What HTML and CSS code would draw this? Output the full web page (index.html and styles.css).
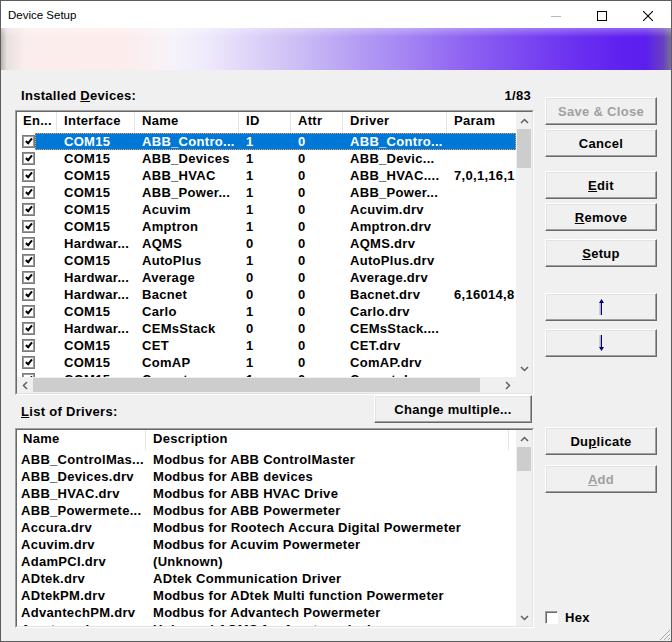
FILE: index.html
```html
<!DOCTYPE html>
<html lang="en">

<head>
    <meta charset="UTF-8">
    <title>Device Setup</title>
    <link rel="stylesheet" href="styles.css">
</head>

<body>
    <div class="window">
        <div class="titlebar">
            <span class="title">Device Setup</span>
            <div class="caption">
                <span class="cap"><svg width="10" height="10" viewBox="0 0 10 10"><path d="M0 5.5h10" stroke="#b8b8b8"/></svg></span>
                <span class="cap"><svg width="10" height="10" viewBox="0 0 10 10"><rect x=".5" y=".5" width="9" height="9" fill="none" stroke="#000"/></svg></span>
                <span class="cap"><svg width="10" height="10" viewBox="0 0 10 10"><path d="M0 0l10 10M10 0L0 10" stroke="#000" stroke-width="1.1"/></svg></span>
            </div>
        </div>

        <div class="banner"></div>

        <div class="client">
            <div class="left">
                <div class="label-row">
                    <span>Installed <u>D</u>evices:</span>
                    <span>1/83</span>
                </div>

                <div class="lv lv-devices">
                    <div class="lv-in">
                        <div class="lv-body">
                            <div class="lv-head dev-head">
                                <span>En...</span>
                                <span>Interface</span>
                                <span>Name</span>
                                <span>ID</span>
                                <span>Attr</span>
                                <span>Driver</span>
                                <span>Param</span>
                            </div>
                            <div class="rows">
                                <div class="row sel"><span class="ck-cell"><span class="chk"></span></span><div class="cells"><span></span><span>COM15</span><span>ABB_Contro...</span><span>1</span><span>0</span><span>ABB_Contro...</span><span></span></div></div>
                                <div class="row"><span class="ck-cell"><span class="chk"></span></span><div class="cells"><span></span><span>COM15</span><span>ABB_Devices</span><span>1</span><span>0</span><span>ABB_Devic...</span><span></span></div></div>
                                <div class="row"><span class="ck-cell"><span class="chk"></span></span><div class="cells"><span></span><span>COM15</span><span>ABB_HVAC</span><span>1</span><span>0</span><span>ABB_HVAC....</span><span>7,0,1,16,1</span></div></div>
                                <div class="row"><span class="ck-cell"><span class="chk"></span></span><div class="cells"><span></span><span>COM15</span><span>ABB_Power...</span><span>1</span><span>0</span><span>ABB_Power...</span><span></span></div></div>
                                <div class="row"><span class="ck-cell"><span class="chk"></span></span><div class="cells"><span></span><span>COM15</span><span>Acuvim</span><span>1</span><span>0</span><span>Acuvim.drv</span><span></span></div></div>
                                <div class="row"><span class="ck-cell"><span class="chk"></span></span><div class="cells"><span></span><span>COM15</span><span>Amptron</span><span>1</span><span>0</span><span>Amptron.drv</span><span></span></div></div>
                                <div class="row"><span class="ck-cell"><span class="chk"></span></span><div class="cells"><span></span><span>Hardwar...</span><span>AQMS</span><span>0</span><span>0</span><span>AQMS.drv</span><span></span></div></div>
                                <div class="row"><span class="ck-cell"><span class="chk"></span></span><div class="cells"><span></span><span>COM15</span><span>AutoPlus</span><span>1</span><span>0</span><span>AutoPlus.drv</span><span></span></div></div>
                                <div class="row"><span class="ck-cell"><span class="chk"></span></span><div class="cells"><span></span><span>Hardwar...</span><span>Average</span><span>0</span><span>0</span><span>Average.drv</span><span></span></div></div>
                                <div class="row"><span class="ck-cell"><span class="chk"></span></span><div class="cells"><span></span><span>Hardwar...</span><span>Bacnet</span><span>0</span><span>0</span><span>Bacnet.drv</span><span>6,16014,8</span></div></div>
                                <div class="row"><span class="ck-cell"><span class="chk"></span></span><div class="cells"><span></span><span>COM15</span><span>Carlo</span><span>1</span><span>0</span><span>Carlo.drv</span><span></span></div></div>
                                <div class="row"><span class="ck-cell"><span class="chk"></span></span><div class="cells"><span></span><span>Hardwar...</span><span>CEMsStack</span><span>0</span><span>0</span><span>CEMsStack....</span><span></span></div></div>
                                <div class="row"><span class="ck-cell"><span class="chk"></span></span><div class="cells"><span></span><span>COM15</span><span>CET</span><span>1</span><span>0</span><span>CET.drv</span><span></span></div></div>
                                <div class="row"><span class="ck-cell"><span class="chk"></span></span><div class="cells"><span></span><span>COM15</span><span>ComAP</span><span>1</span><span>0</span><span>ComAP.drv</span><span></span></div></div>
                                <div class="row"><span class="ck-cell"><span class="chk"></span></span><div class="cells"><span></span><span>COM15</span><span>Conext</span><span>1</span><span>0</span><span>Conext.drv</span><span></span></div></div>
                            </div>
                        </div>
                        <div class="vscroll vs-devices">
                            <span class="sb-btn"><svg width="9" height="6" viewBox="0 0 9 6"><path d="M1 5l3.5-3.5L8 5" fill="none" stroke="#606060" stroke-width="1.5"/></svg></span>
                            <span class="thumb"></span>
                            <span class="track"></span>
                            <span class="sb-btn"><svg width="9" height="6" viewBox="0 0 9 6"><path d="M1 1l3.5 3.5L8 1" fill="none" stroke="#606060" stroke-width="1.5"/></svg></span>
                        </div>
                        <div class="hscroll">
                            <span class="sb-btn"><svg width="6" height="9" viewBox="0 0 6 9"><path d="M5 1L1.5 4.5 5 8" fill="none" stroke="#606060" stroke-width="1.5"/></svg></span>
                            <span class="thumb"></span>
                            <span class="track"></span>
                            <span class="sb-btn"><svg width="6" height="9" viewBox="0 0 6 9"><path d="M1 1l3.5 3.5L1 8" fill="none" stroke="#606060" stroke-width="1.5"/></svg></span>
                        </div>
                        <div class="corner"></div>
                    </div>
                </div>

                <div class="mid-row">
                    <span class="mid-label"><u>L</u>ist of Drivers:</span>
                    <button class="btn btn-change">Change multiple...</button>
                </div>

                <div class="lv lv-drivers">
                    <div class="lv-in">
                        <div class="lv-body">
                            <div class="lv-head drv-head">
                                <span>Name</span>
                                <span>Description</span>
                                <span></span>
                            </div>
                            <div class="rows">
                                <div class="drow"><span>ABB_ControlMas...</span><span>Modbus for ABB ControlMaster</span></div>
                                <div class="drow"><span>ABB_Devices.drv</span><span>Modbus for ABB devices</span></div>
                                <div class="drow"><span>ABB_HVAC.drv</span><span>Modbus for ABB HVAC Drive</span></div>
                                <div class="drow"><span>ABB_Powermete...</span><span>Modbus for ABB Powermeter</span></div>
                                <div class="drow"><span>Accura.drv</span><span>Modbus for Rootech Accura Digital Powermeter</span></div>
                                <div class="drow"><span>Acuvim.drv</span><span>Modbus for Acuvim Powermeter</span></div>
                                <div class="drow"><span>AdamPCI.drv</span><span>(Unknown)</span></div>
                                <div class="drow"><span>ADtek.drv</span><span>ADtek Communication Driver</span></div>
                                <div class="drow"><span>ADtekPM.drv</span><span>Modbus for ADtek Multi function Powermeter</span></div>
                                <div class="drow"><span>AdvantechPM.drv</span><span>Modbus for Advantech Powermeter</span></div>
                                <div class="drow"><span>Amptron.drv</span><span>Universal AQMS for Amptron devices</span></div>
                            </div>
                        </div>
                        <div class="vscroll vs-drivers">
                            <span class="sb-btn"><svg width="9" height="6" viewBox="0 0 9 6"><path d="M1 5l3.5-3.5L8 5" fill="none" stroke="#606060" stroke-width="1.5"/></svg></span>
                            <span class="thumb"></span>
                            <span class="track"></span>
                            <span class="sb-btn"><svg width="9" height="6" viewBox="0 0 9 6"><path d="M1 1l3.5 3.5L8 1" fill="none" stroke="#606060" stroke-width="1.5"/></svg></span>
                        </div>
                    </div>
                </div>
            </div>

            <div class="right">
                <button class="btn btn-save" disabled>Save &amp; Close</button>
                <button class="btn btn-cancel">Cancel</button>
                <button class="btn btn-edit"><u>E</u>dit</button>
                <button class="btn btn-remove"><u>R</u>emove</button>
                <button class="btn btn-setup"><u>S</u>etup</button>
                <button class="btn btn-up"><svg width="7" height="16" viewBox="0 0 7 16"><rect x="1.5" y="4" width="1.5" height="12" fill="#b0b0b8"/><rect x="3" y="3" width="1" height="13" fill="#000080"/><path d="M3.5 0L6 4H1z" fill="#000080"/></svg></button>
                <button class="btn btn-down"><svg width="7" height="16" viewBox="0 0 7 16"><rect x="1.5" y="0" width="1.5" height="12" fill="#b0b0b8"/><rect x="3" y="0" width="1" height="13" fill="#000080"/><path d="M3.5 16L6 12H1z" fill="#000080"/></svg></button>
                <button class="btn btn-dup">Du<u>p</u>licate</button>
                <button class="btn btn-add" disabled><u>A</u>dd</button>
                <label class="hex"><span class="hex-box"></span>Hex</label>
            </div>
        </div>

        <svg class="grip" width="12" height="12" viewBox="0 0 12 12">
            <path d="M11 1L1 11M11 5L5 11M11 9L9 11" stroke="#a8a8a8" stroke-width="1"/>
        </svg>
    </div>
</body>

</html>
```

FILE: styles.css
```css
body {
    margin: 0;
    font-family: "Liberation Sans", Arial, sans-serif;
}

.window {
    position: relative;
    width: 672px;
    height: 642px;
    box-sizing: border-box;
    border: 1px solid #5c5c5c;
    background: #f0f0f0;
    display: flex;
    flex-direction: column;
}

/* title bar */
.titlebar {
    height: 27px;
    flex-shrink: 0;
    background: #fff;
    display: flex;
    align-items: center;
}

.title {
    padding-left: 7px;
    font-size: 11.5px;
    color: #000;
}

.caption {
    margin-left: auto;
    align-self: stretch;
    display: flex;
}

.cap {
    width: 46px;
    padding-top: 2px;
    display: flex;
    align-items: center;
    justify-content: center;
}

.banner {
    height: 42px;
    flex-shrink: 0;
    background:
        linear-gradient(to bottom, rgba(255, 255, 255, 0.3), rgba(255, 255, 255, 0) 9px),
        linear-gradient(to right, #b9b3b3 0, #e9e0e0 6px, #fbeded 24px, #fdecec 120px, #f7f3f9 170px,
            #efeafb 205px, #e0d6f9 245px, #cbbcf5 300px, #b39bf4 360px, #a485f3 405px, #8e62f2 465px,
            #7a46f1 525px, #6a30f0 575px, #5f21f0 620px, #5c1eee 645px, #6840c0 662px, #7c7890 672px);
}

/* client area */
.client {
    flex: 1;
    display: flex;
    padding-left: 14px;
    font-size: 13px;
    font-weight: bold;
    letter-spacing: 0.3px;
    color: #000;
}

.left {
    width: 519px;
    display: flex;
    flex-direction: column;
}

.right {
    width: 112px;
    margin-left: 11px;
    display: flex;
    flex-direction: column;
}

.label-row {
    margin-top: 18px;
    height: 16px;
    line-height: 16px;
    padding: 0 3px 0 6px;
    display: flex;
    justify-content: space-between;
}

/* list views */
.lv {
    box-sizing: border-box;
    border: 1px solid;
    border-color: #a0a0a0 #fff #fff #a0a0a0;
}

.lv-devices {
    margin-top: 6px;
    height: 285px;
}

.lv-drivers {
    margin-top: 5px;
    height: 200px;
}

.lv-in {
    height: 100%;
    box-sizing: border-box;
    border: 1px solid;
    border-color: #696969 #e3e3e3 #e3e3e3 #696969;
    background: #fff;
    display: grid;
    grid-template-columns: 1fr 16px;
}

.lv-devices .lv-in {
    grid-template-rows: 1fr 16px;
}

.lv-body {
    overflow: hidden;
    min-width: 0;
}

.lv-head {
    height: 20px;
    line-height: 18px;
    display: grid;
    white-space: nowrap;
}

.lv-head span {
    padding-left: 7px;
    overflow: hidden;
    border-right: 1px solid #e5e5e5;
}

.lv-head span:first-child {
    padding-left: 6px;
}

.dev-head {
    grid-template-columns: 40px 78px 104px 52px 52px 104px 69px;
}

.dev-head span:last-child {
    border-right: none;
}

.drv-head {
    grid-template-columns: 129px 363px 7px;
}

.rows {
    padding-top: 1px;
}

.row {
    height: 17px;
    line-height: 17px;
    display: flex;
}

.ck-cell {
    width: 18px;
    padding-left: 5px;
    box-sizing: border-box;
    display: flex;
    align-items: center;
}

.chk {
    width: 13px;
    height: 13px;
    box-sizing: border-box;
    border: 1px solid #7a7a7a;
    box-shadow: inset 0 0 0 1px #9a9a9a;
    background: #fff;
    display: flex;
    align-items: center;
    justify-content: center;
}

.chk::after {
    content: "";
    width: 2px;
    height: 5px;
    margin-top: -2px;
    border: solid #000;
    border-width: 0 2px 2px 0;
    transform: rotate(40deg);
}

.cells {
    width: 481px;
    display: grid;
    grid-template-columns: 22px 78px 104px 52px 52px 104px 69px;
    white-space: nowrap;
}

.cells span {
    padding-left: 7px;
    overflow: hidden;
}

.row.sel .cells {
    background: #0078d7;
    color: #fff;
    outline: 1px dotted #f0a050;
    outline-offset: -1px;
}

.drow {
    height: 17px;
    line-height: 17px;
    display: grid;
    grid-template-columns: 129px 363px;
    white-space: nowrap;
}

.drow span:first-child {
    padding-left: 4px;
    overflow: hidden;
}

.drow span:last-child {
    padding-left: 7px;
}

/* scroll bars */
.vscroll,
.hscroll {
    background: #f0f0f0;
    display: flex;
}

.vscroll {
    flex-direction: column;
}

.sb-btn {
    flex-shrink: 0;
    width: 16px;
    height: 16px;
    display: flex;
    align-items: center;
    justify-content: center;
}

.vscroll .sb-btn {
    height: 17px;
}

.thumb {
    background: #cdcdcd;
    flex-shrink: 0;
}

.vscroll .thumb {
    margin: 0 1px;
}

.vs-devices .thumb {
    height: 39px;
}

.vs-drivers .thumb {
    height: 24px;
}

.hscroll .thumb {
    width: 447px;
    margin: 1px 0;
}

.track {
    flex: 1;
}

.corner {
    background: #f0f0f0;
}

.mid-row {
    display: flex;
    align-items: flex-end;
}

.mid-label {
    line-height: 16px;
    margin: 0 0 3px 6px;
}

/* buttons */
.btn {
    display: flex;
    align-items: center;
    justify-content: center;
    flex-shrink: 0;
    width: 112px;
    height: 28px;
    box-sizing: border-box;
    padding: 0;
    background: #f0f0f0;
    border: 1px solid;
    border-color: #fff #696969 #696969 #fff;
    box-shadow: inset -1px -1px #a0a0a0, inset 1px 1px #e3e3e3;
    font: inherit;
    letter-spacing: inherit;
    color: #000;
    white-space: nowrap;
}

.btn:disabled {
    color: #a0a0a0;
}

.btn-change {
    width: 158px;
    margin-left: auto;
    margin-right: 2px;
}

.btn-save {
    margin-top: 27px;
}

.btn-cancel,
.btn-remove {
    margin-top: 4px;
}

.btn-edit {
    margin-top: 14px;
}

.btn-setup,
.btn-down {
    margin-top: 8px;
}

.btn-up {
    margin-top: 26px;
}

.btn-dup {
    margin-top: 70px;
}

.btn-add {
    margin-top: 10px;
}

.hex {
    margin-top: auto;
    margin-bottom: 17px;
    height: 13px;
    display: flex;
    align-items: center;
    gap: 7px;
}

.hex-box {
    width: 13px;
    height: 13px;
    box-sizing: border-box;
    border: 1px solid;
    border-color: #a0a0a0 #fff #fff #a0a0a0;
    box-shadow: inset 1px 1px #696969;
    background: #fff;
}

.grip {
    position: absolute;
    right: 0;
    bottom: 0;
}
```
